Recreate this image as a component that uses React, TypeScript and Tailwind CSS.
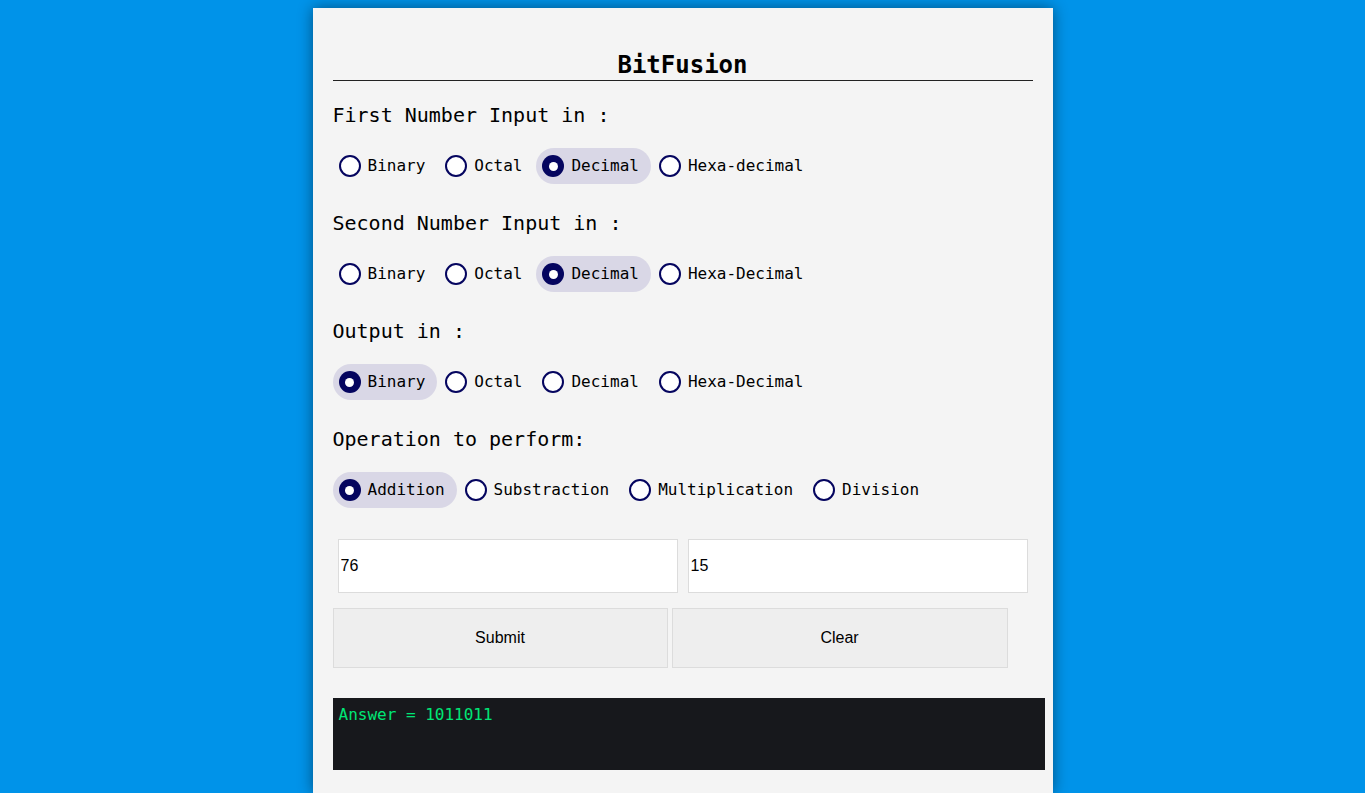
const mono = "font-['DejaVu_Sans_Mono',monospace]";

type Opt = { label: string; checked?: boolean };

function Radio({ label, checked }: Opt) {
  return (
    <label
      className={`flex items-center gap-[7px] rounded-full py-[7px] pl-[6px] pr-[12px] ${
        checked ? 'bg-[#d9d7e6]' : ''
      }`}
    >
      {checked ? (
        <span className="flex h-[22px] w-[22px] items-center justify-center rounded-full bg-[#05055f]">
          <span className="h-[9px] w-[9px] rounded-full bg-white" />
        </span>
      ) : (
        <span className="h-[22px] w-[22px] rounded-full border-2 border-[#05055f] bg-white" />
      )}
      <span className="text-base leading-none text-black">{label}</span>
    </label>
  );
}

function Group({ title, options }: { title: string; options: Opt[] }) {
  return (
    <div className="flex flex-col">
      <p className="h-[30px] text-[20px] leading-[30px] whitespace-pre text-black">{title}</p>
      <div className="mt-[18px] flex items-center gap-[2px]">
        {options.map((o) => (
          <Radio key={o.label} {...o} />
        ))}
      </div>
    </div>
  );
}

export default function App() {
  return (
    <div className="min-h-[793px] bg-[#0093e9] pt-2">
      <div
        className={`mx-auto min-h-[785px] w-[740px] bg-[#f4f4f4] px-5 pt-[46px] shadow-[0_0_14px_rgba(0,0,0,0.45)] ${mono}`}
      >
        {/* Header */}
        <h1 className="border-b border-[#222] pb-[4px] text-center text-2xl leading-[22px] font-bold text-black">
          BitFusion
        </h1>

        <div className="mt-[19px] flex flex-col gap-[24px]">
          <Group
            title="First Number Input in :"
            options={[
              { label: 'Binary' },
              { label: 'Octal' },
              { label: 'Decimal', checked: true },
              { label: 'Hexa-decimal' },
            ]}
          />
          <Group
            title="Second Number Input in :"
            options={[
              { label: 'Binary' },
              { label: 'Octal' },
              { label: 'Decimal', checked: true },
              { label: 'Hexa-Decimal' },
            ]}
          />
          <Group
            title="Output in :"
            options={[
              { label: 'Binary', checked: true },
              { label: 'Octal' },
              { label: 'Decimal' },
              { label: 'Hexa-Decimal' },
            ]}
          />
          <Group
            title="Operation to perform:"
            options={[
              { label: 'Addition', checked: true },
              { label: 'Substraction' },
              { label: 'Multiplication' },
              { label: 'Division' },
            ]}
          />
        </div>

        {/* Inputs */}
        <div className="mt-[31px] flex gap-[10px] px-[5px] font-['Liberation_Sans',Arial,sans-serif]">
          <input
            defaultValue="76"
            className="h-[54px] w-[340px] border border-[#dcdcdc] bg-white px-[2px] text-base text-black outline-none"
          />
          <input
            defaultValue="15"
            className="h-[54px] w-[340px] border border-[#dcdcdc] bg-white px-[2px] text-base text-black outline-none"
          />
        </div>

        <div className="mt-[15px] flex gap-[4px] font-['Liberation_Sans',Arial,sans-serif]">
          <button className="h-[60px] w-[335px] border border-[#dcdcdc] bg-[#eeeeee] text-base text-black">
            Submit
          </button>
          <button className="h-[60px] w-[336px] border border-[#dcdcdc] bg-[#eeeeee] text-base text-black">
            Clear
          </button>
        </div>

        {/* Answer */}
        <div className="mt-[30px] h-[72px] w-[712px] bg-[#17181c] px-[6px] pt-[7px]">
          <p className="text-base leading-[20px] text-[#00e676]">Answer = 1011011</p>
        </div>
      </div>
    </div>
  );
}
